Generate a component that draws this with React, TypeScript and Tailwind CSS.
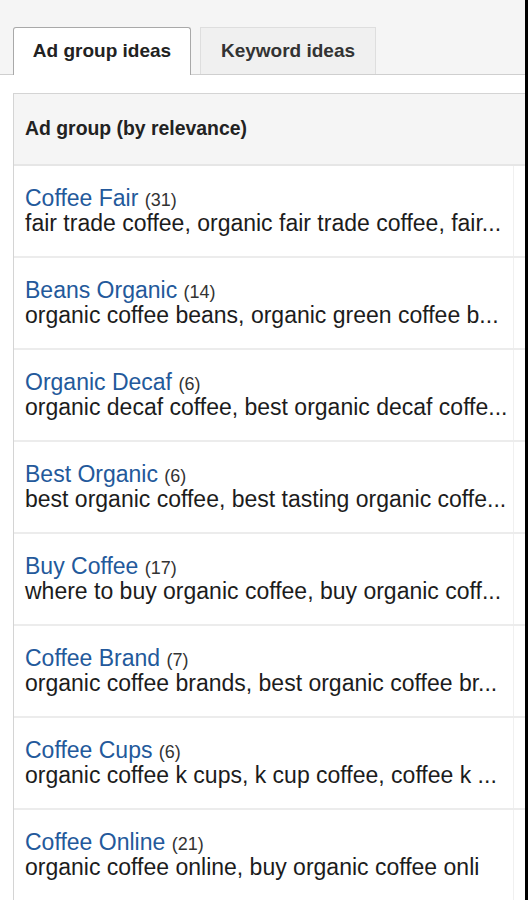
const rows = [
  { name: "Coffee Fair", count: 31, keywords: "fair trade coffee, organic fair trade coffee, fair..." },
  { name: "Beans Organic", count: 14, keywords: "organic coffee beans, organic green coffee b..." },
  { name: "Organic Decaf", count: 6, keywords: "organic decaf coffee, best organic decaf coffe..." },
  { name: "Best Organic", count: 6, keywords: "best organic coffee, best tasting organic coffe..." },
  { name: "Buy Coffee", count: 17, keywords: "where to buy organic coffee, buy organic coff..." },
  { name: "Coffee Brand", count: 7, keywords: "organic coffee brands, best organic coffee br..." },
  { name: "Coffee Cups", count: 6, keywords: "organic coffee k cups, k cup coffee, coffee k ..." },
  { name: "Coffee Online", count: 21, keywords: "organic coffee online, buy organic coffee onli" },
];

export default function App() {
  return (
    <div className="flex h-[900px] w-[528px] overflow-hidden bg-white font-['Liberation_Sans',Arial,sans-serif]">
      <div className="flex w-[525px] flex-col">
        {/* Tabs */}
        <div className="flex h-[75px] shrink-0 items-end gap-[9px] border-b border-[#cfcfcf] bg-[#f5f5f5] pl-[13px]">
          <div className="-mb-px flex h-[48px] w-[178px] items-center justify-center rounded-t-[3px] border border-b-0 border-[#a9a9a9] bg-white text-[19px] font-bold text-[#222]">
            Ad group ideas
          </div>
          <div className="flex h-[47px] w-[176px] items-center justify-center border border-b-0 border-[#dedede] bg-[#f0f0f0] text-[19px] font-bold text-[#333]">
            Keyword ideas
          </div>
        </div>

        {/* Table */}
        <div className="ml-[13px] mt-[18px] flex-1 border-l border-t border-[#d4d4d4]">
          <div className="flex h-[72px] items-center border-b-2 border-[#e6e6e6] bg-[#f5f5f5] pl-[11px] text-[19.4px] font-bold text-[#222]">
            Ad group (by relevance)
          </div>
          {rows.map((r) => (
            <div key={r.name} className="flex h-[92px] shrink-0 border-b-2 border-[#ececec]">
              <div className="w-[500px] overflow-hidden whitespace-nowrap border-r border-[#f0f0f0] pl-[11px] pt-[19px]">
                <div className="h-[26px] text-[23px] leading-[26px]">
                  <span className="text-[#23599b]">{r.name}</span>{" "}
                  <span className="text-[18px] leading-none text-[#333]">({r.count})</span>
                </div>
                <div className="h-[26px] text-[23px] leading-[24px] text-[#1c1c1c]">{r.keywords}</div>
              </div>
              <div className="flex-1" />
            </div>
          ))}
        </div>
      </div>
      <div className="w-[3px] shrink-0 bg-black" />
    </div>
  );
}
